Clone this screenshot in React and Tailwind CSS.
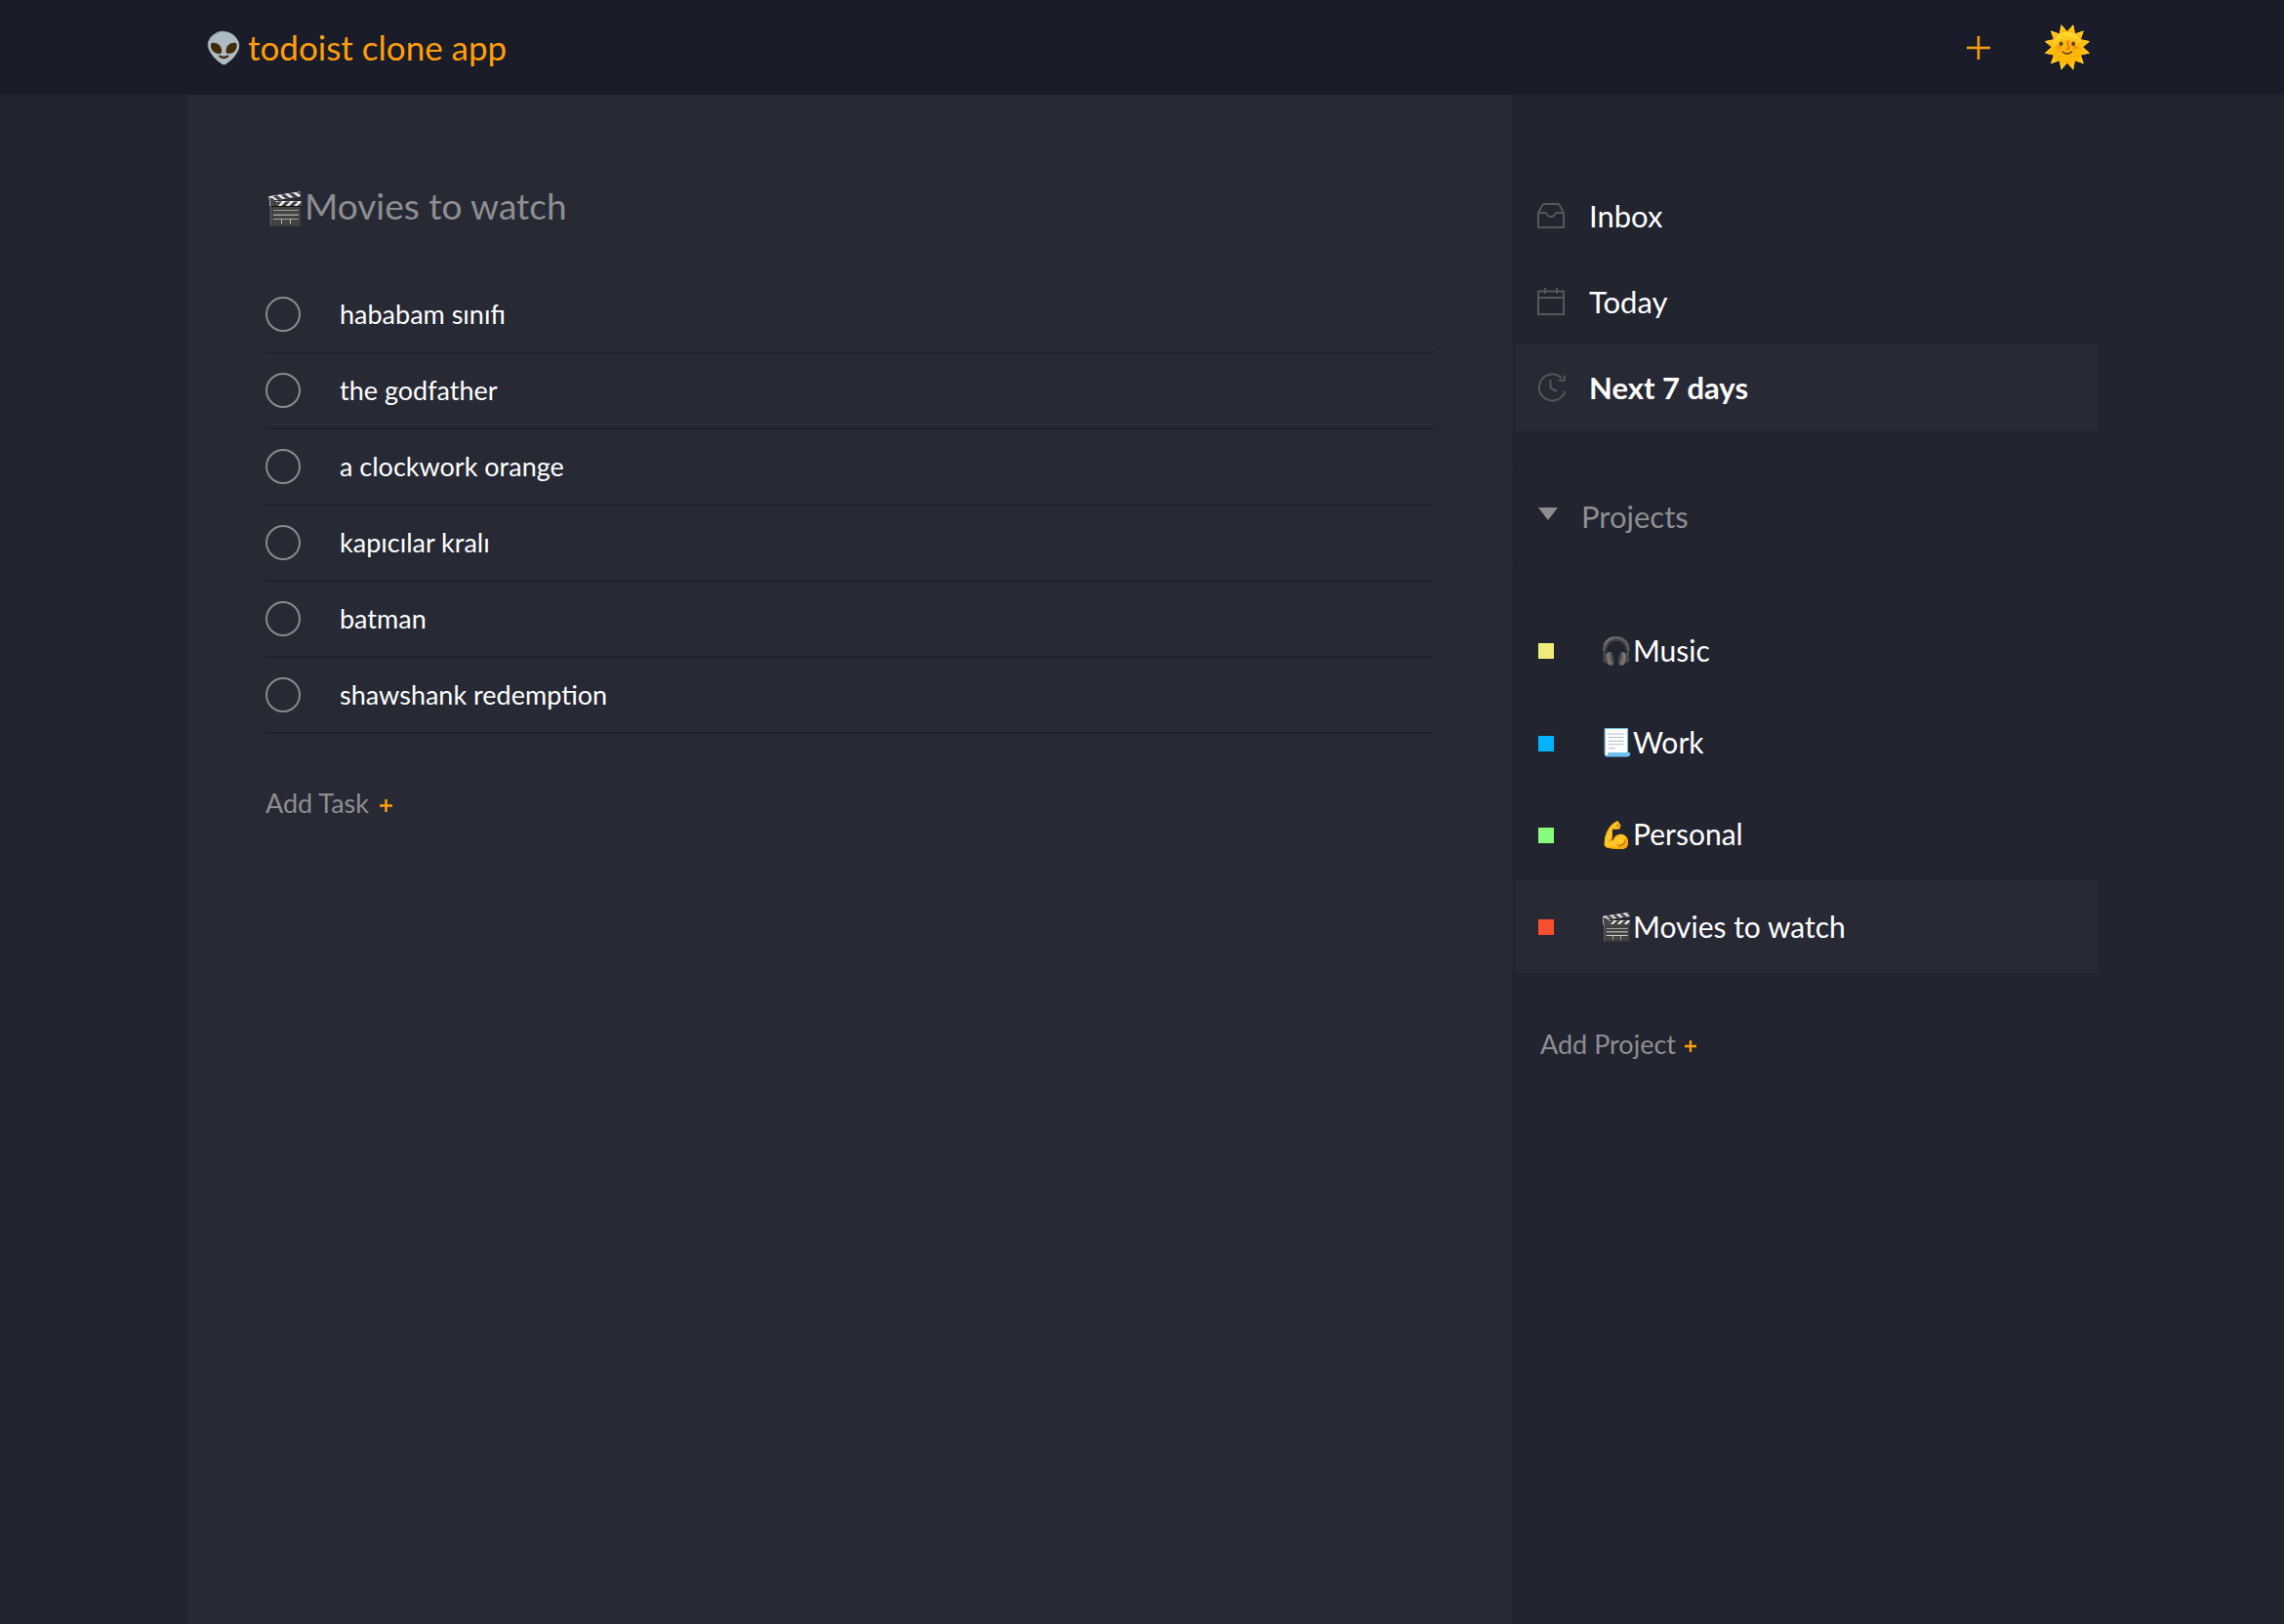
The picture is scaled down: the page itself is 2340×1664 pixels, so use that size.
const tasks = ['hababam sınıfı', 'the godfather', 'a clockwork orange', 'kapıcılar kralı', 'batman', 'shawshank redemption']

const projects = [
  { emoji: '🎧', name: 'Music', color: 'bg-[#f0ea78]' },
  { emoji: '📃', name: 'Work', color: 'bg-[#00b4ff]' },
  { emoji: '💪', name: 'Personal', color: 'bg-[#86fb7c]' },
  { emoji: '🎬', name: 'Movies to watch', color: 'bg-[#fb4f30]', active: true },
]

export default function App() {
  return (
    <div className="min-h-[1664px] bg-[#222430] font-['Lato',sans-serif] text-[#fff]">
      <header className="h-[97px] bg-[#1a1c29]">
        <div className="mx-[192px] flex h-full items-center justify-between pl-[18px] pr-[5px]">
          <div className="flex items-center gap-[5px] text-[35px] text-[#ff9f0a]">
            <span className="text-[31px]">👽</span>
            <span>todoist clone app</span>
          </div>
          <div className="flex items-center gap-[54px]">
            <svg width="24" height="24" viewBox="0 0 24 24" stroke="#ff9f0a" strokeWidth="2.5">
              <path d="M12 0v24M0 12h24" />
            </svg>
            <span className="mb-[3px] text-[40px] leading-none">🌞</span>
          </div>
        </div>
      </header>

      <div className="flex min-h-[1567px] pl-[192px]">
        <main className="w-[1358px] bg-[#272935] px-[80px] pt-[87px]">
          <h1 className="h-[54px] text-[37px] leading-[54px] text-[#8e8e90]">
            <span className="text-[32px]">🎬</span>Movies to watch
          </h1>
          <ul className="mt-[46px] w-[1198px]">
            {tasks.map((t) => (
              <li key={t} className="flex h-[78px] items-center gap-[40px] border-b-2 border-[#1f212c]">
                <span className="size-[36px] rounded-full border-2 border-[#8a8a8a]" />
                <span className="text-[27px]">{t}</span>
              </li>
            ))}
          </ul>
          <div className="mt-[51px] flex items-center gap-[11px] text-[27px] text-[#8e8e90]">
            Add Task
            <Plus size={13} />
          </div>
        </main>

        <aside className="w-[600px] border-l-2 border-[#1f212c] pt-[80px]">
          <NavRow icon={<InboxIcon />} label="Inbox" />
          <NavRow icon={<CalendarIcon />} label="Today" />
          <NavRow icon={<ClockIcon />} label="Next 7 days" active />

          <div className="mt-[40px] flex h-[97px] items-center gap-[24px] border-y-2 border-[#1f212c] pl-[24px] text-[31px] text-[#8e8e90]">
            <span className="mb-[6px] h-0 w-0 border-x-[10px] border-t-[13px] border-x-transparent border-t-[#8e8e90]" />
            Projects
          </div>

          <ul className="mt-[41px]">
            {projects.map((p) => (
              <li key={p.name} className={`flex h-[94.4px] items-center pl-[24px] text-[30px] ${p.active ? 'bg-[#272935]' : ''}`}>
                <span className={`mt-[2px] size-[16px] ${p.color}`} />
                <span className="ml-[47px] text-[27px]">{p.emoji}</span>
                <span>{p.name}</span>
              </li>
            ))}
          </ul>

          <div className="mt-[53px] flex items-center gap-[9px] pl-[26px] text-[27px] text-[#8e8e90]">
            Add Project
            <Plus size={12} />
          </div>
        </aside>
      </div>
    </div>
  )
}

function Plus({ size }) {
  return (
    <svg width={size} height={size} viewBox="0 0 13 13" stroke="#ff9f0a" strokeWidth="2.5" className="mt-[4px]">
      <path d="M6.5 0v13M0 6.5h13" />
    </svg>
  )
}

function InboxIcon() {
  return (
    <svg width="28" height="28" viewBox="0 0 28 28" fill="none" stroke="currentColor" strokeWidth="2" strokeLinejoin="round">
      <path d="M6 2h16l5 9v15H1V11z" />
      <path d="M1 11h8c1 3 3 4 5 4s4-1 5-4h8" />
    </svg>
  )
}

function CalendarIcon() {
  return (
    <svg width="28" height="28" viewBox="0 0 28 28" fill="none" stroke="currentColor" strokeWidth="2">
      <rect x="1" y="3.5" width="26" height="23.5" />
      <path d="M1 10h26M8 0v6M20 0v6" />
    </svg>
  )
}

function ClockIcon() {
  return (
    <svg width="30" height="30" viewBox="0 0 30 30" fill="none" stroke="currentColor" strokeWidth="2">
      <path d="M25 5.5A13.5 13.5 0 1 0 28.4 18.5" />
      <path d="M22 7.5l5.5.5.5-5.5" />
      <path d="M13.5 7v8.5l6.5 3.5" />
    </svg>
  )
}

function NavRow({ icon, label, active }) {
  return (
    <div className={`flex h-[88px] items-center gap-[25px] pl-[23px] text-[31px] ${active ? 'bg-[#272935] font-bold' : ''}`}>
      <span className="w-[28px] text-[#55565c]">{icon}</span>
      {label}
    </div>
  )
}
